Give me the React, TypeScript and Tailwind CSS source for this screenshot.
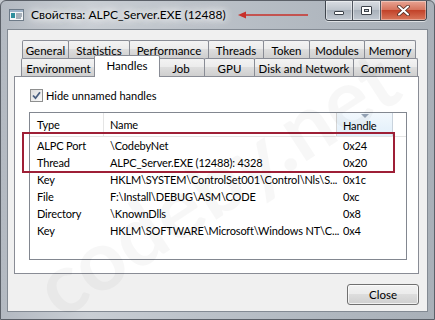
import React from "react";

const font = "font-['Lato',sans-serif]";

type Tab = { label: string; w: number; selected?: boolean };

const row1: Tab[] = [
  { label: "General", w: 47 },
  { label: "Statistics", w: 62 },
  { label: "Performance", w: 80 },
  { label: "Threads", w: 56 },
  { label: "Token", w: 47 },
  { label: "Modules", w: 56 },
  { label: "Memory", w: 52 },
];

const row2: Tab[] = [
  { label: "Environment", w: 75 },
  { label: "Handles", w: 62, selected: true },
  { label: "Job", w: 48 },
  { label: "GPU", w: 51 },
  { label: "Disk and Network", w: 100 },
  { label: "Comment", w: 65 },
];

const rows = [
  ["ALPC Port", "\\CodebyNet", "0x24"],
  ["Thread", "ALPC_Server.EXE (12488): 4328", "0x20"],
  ["Key", "HKLM\\SYSTEM\\ControlSet001\\Control\\Nls\\S...", "0x1c"],
  ["File", "F:\\Install\\DEBUG\\ASM\\CODE", "0xc"],
  ["Directory", "\\KnownDlls", "0x8"],
  ["Key", "HKLM\\SOFTWARE\\Microsoft\\Windows NT\\C...", "0x4"],
];

function TabItem({ t, first }: { t: Tab; first: boolean }) {
  if (t.selected) {
    return (
      <div
        style={{ width: t.w + 4 }}
        className="relative z-10 -mx-[2px] -mt-[3px] flex h-[22px] shrink-0 items-start justify-center whitespace-nowrap rounded-t-[2px] border border-b-0 border-[#898c95] bg-white pt-[2px] text-[11.5px] leading-[15px] text-black"
      >
        {t.label}
      </div>
    );
  }
  return (
    <div
      style={{ width: t.w }}
      className={`flex h-[18px] shrink-0 items-center justify-center whitespace-nowrap rounded-t-[2px] border border-b-0 border-[#898c95] bg-[linear-gradient(#f3f3f3,#ebebeb_50%,#dddddd_50%,#cfcfcf)] pt-[1px] text-[11.5px] leading-[15px] text-black ${first ? "" : "-ml-px"}`}
    >
      {t.label}
    </div>
  );
}

function TitleIcon() {
  return (
    <svg width="15" height="12" viewBox="0 0 15 12" className="shrink-0">
      <rect x="0.5" y="0.5" width="14" height="11" fill="#f4f6f8" stroke="#6d7a88" />
      <rect x="1" y="1" width="13" height="2" fill="#9fb3c8" />
      <rect x="2" y="4" width="4" height="5" fill="#2f8f9d" />
      <rect x="7" y="4.5" width="6" height="1" fill="#5a6b7c" />
      <rect x="7" y="6.5" width="6" height="1" fill="#5a6b7c" />
      <rect x="7" y="8.5" width="5" height="1" fill="#5a6b7c" />
    </svg>
  );
}

function WinButtons() {
  return (
    <div className="absolute right-[7px] top-0 flex h-[20px] w-[102px] overflow-hidden rounded-b-[4px] border border-t-0 border-[#3f454d] shadow-[0_1px_0_rgba(255,255,255,0.6)]">
      <div className="flex h-full w-[27px] flex-none items-center justify-center border-r border-[#50565f] bg-[linear-gradient(#d9dde2,#bcc3cb_50%,#a9b1bb_50%,#c3cad2)] shadow-[inset_0_0_0_1px_rgba(255,255,255,0.45)]">
        <div className="mt-[5px] h-[4px] w-[10px] rounded-[1px] border border-[#3c424a] bg-white" />
      </div>
      <div className="flex h-full w-[28px] flex-none items-center justify-center border-r border-[#50565f] bg-[linear-gradient(#d9dde2,#bcc3cb_50%,#a9b1bb_50%,#c3cad2)] shadow-[inset_0_0_0_1px_rgba(255,255,255,0.45)]">
        <div className="flex h-[9px] w-[11px] items-center justify-center rounded-[1px] border border-[#3c424a] bg-white">
          <div className="h-[3px] w-[5px] border border-[#3c424a] bg-[#c9ced5]" />
        </div>
      </div>
      <div className="flex h-full w-[45px] flex-none items-center justify-center bg-[linear-gradient(#e8a493,#d47059_50%,#c2432a_50%,#d9775b)] shadow-[inset_0_0_0_1px_rgba(255,255,255,0.35)]">
        <svg width="13" height="11" viewBox="0 0 13 11">
          <path d="M2 1.5 L11 9.5 M11 1.5 L2 9.5" stroke="#4a2a22" strokeWidth="3.6" strokeLinecap="round" />
          <path d="M2 1.5 L11 9.5 M11 1.5 L2 9.5" stroke="#ffffff" strokeWidth="2" strokeLinecap="round" />
        </svg>
      </div>
    </div>
  );
}

function CheckBox() {
  return (
    <div className="flex h-[13px] w-[13px] shrink-0 items-center justify-center border border-[#8e8f8f] bg-[linear-gradient(135deg,#dcdcdc,#fbfbfb)]">
      <svg width="9" height="9" viewBox="0 0 9 9">
        <path d="M1 4.5 L3.5 7.2 L8 1.2" fill="none" stroke="#4a5f80" strokeWidth="1.8" />
      </svg>
    </div>
  );
}

export default function App() {
  return (
    <div className={`relative h-[320px] w-[435px] overflow-hidden bg-[#c4c9cf] ${font}`}>
      <div className="flex h-full w-full flex-col rounded-t-[6px] border border-[#5b6068] bg-[linear-gradient(90deg,#b3b9c1,#c9ced4_20%,#bcc2c9_45%,#b0b7bf_75%,#a9b0b8)]">
        {/* title bar */}
        <div className="relative flex h-[28px] shrink-0 items-center pl-[8px]">
          <TitleIcon />
          <span className="ml-[7px] whitespace-nowrap text-[12px] leading-[16px] text-black [text-shadow:0_0_6px_#fff,0_0_10px_#fff,0_0_14px_#fff]">
            Свойства: ALPC_Server.EXE (12488)
          </span>
          <svg width="72" height="8" viewBox="0 0 72 8" className="ml-[12px] shrink-0">
            <path d="M3 4 L70 4" stroke="#c8302a" strokeWidth="1.6" />
            <path d="M0 4 L8 0.5 L8 7.5 Z" fill="#c8302a" />
          </svg>
          <WinButtons />
        </div>

        {/* client area */}
        <div className="mx-[6px] h-[283px] shrink-0 border border-[#838a93] bg-[#f0f0f0]">
          <div className="ml-[6px] mt-[10px]">
            {/* tab rows */}
            <div className="flex h-[18px] items-start pl-[8px]">
              {row1.map((t, i) => (
                <TabItem key={t.label} t={t} first={i === 0} />
              ))}
            </div>
            <div className="flex h-[18px] items-start pl-[7px]">
              {row2.map((t, i) => (
                <TabItem key={t.label} t={t} first={i === 0} />
              ))}
            </div>

            {/* panel */}
            <div className="relative h-[198px] w-[405px] border border-[#898c95] bg-white">
              <div className="ml-[15px] mt-[12px] flex h-[13px] items-center gap-[3px]">
                <CheckBox />
                <span className="text-[11px] leading-[13px] text-black">Hide unnamed handles</span>
              </div>

              {/* list view */}
              <div className="ml-[14px] mt-[10px] h-[148px] w-[378px] border border-[#828790] bg-white text-[11px] tracking-[-0.15px] text-black">
                <div className="flex h-[24px] border-b border-[#e5e5e5]">
                  <div className="flex w-[74px] items-center border-r border-[#e5e5e5] pl-[7px] pt-[2px]">Type</div>
                  <div className="flex w-[233px] items-center border-r border-[#d5d5d5] pl-[6px] pt-[2px]">Name</div>
                  <div className="relative flex w-[56px] items-center border-r border-[#c9d3dd] bg-[linear-gradient(#f2f8fd,#e1effa)] pl-[6px] pt-[4px]">
                    <svg width="8" height="4" viewBox="0 0 8 4" className="absolute left-[24px] top-[1px]">
                      <path d="M0 0 L8 0 L4 4 Z" fill="#97a6b8" />
                    </svg>
                    Handle
                  </div>
                  <div className="flex-1" />
                </div>
                {rows.map((r, i) => (
                  <div key={i} className="flex h-[17px] items-center leading-[17px]">
                    <div className="w-[74px] pl-[7px]">{r[0]}</div>
                    <div className="w-[233px] whitespace-nowrap pl-[6px]">{r[1]}</div>
                    <div className="w-[56px] pl-[6px]">{r[2]}</div>
                  </div>
                ))}
              </div>

              {/* red highlight annotation */}
              <div className="pointer-events-none absolute left-[7px] top-[55px] h-[41px] w-[373px] border-2 border-[#9e1f36]" />
            </div>

            {/* close button */}
            <div className="mr-[8px] mt-[10px] flex justify-end">
              <div className="flex h-[21px] w-[72px] items-center justify-center rounded-[3px] border border-[#707070] bg-[linear-gradient(#f2f2f2,#ebebeb_50%,#dddddd_50%,#cfcfcf)] text-[11.5px] text-black shadow-[inset_0_0_0_1px_rgba(255,255,255,0.7)]">
                Close
              </div>
            </div>
          </div>
        </div>
      </div>

      {/* faint watermark */}
      <div className="pointer-events-none absolute left-[10px] top-[140px] -rotate-[33deg] select-none whitespace-nowrap text-[84px] font-bold leading-none text-black/[0.03]">
        codeby.net
      </div>
    </div>
  );
}
